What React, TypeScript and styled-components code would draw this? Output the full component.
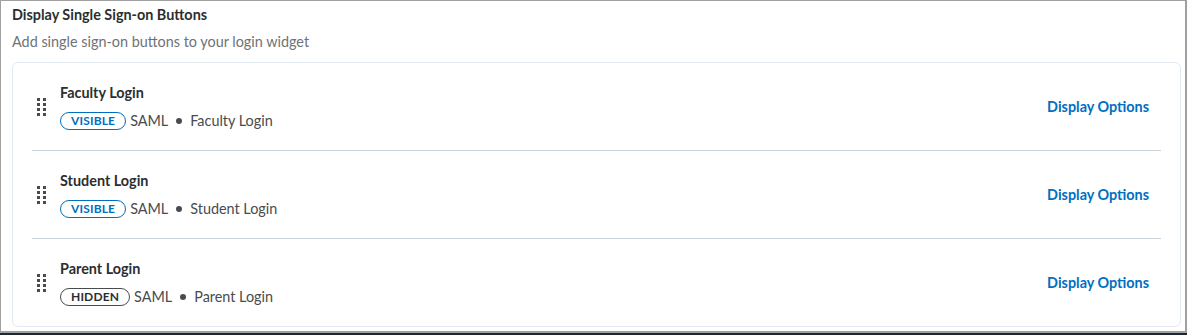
import React from "react";
import styled, { createGlobalStyle } from "styled-components";

const GlobalStyle = createGlobalStyle`
  html, body {
    margin: 0;
    padding: 0;
    background: #ffffff;
  }
  body {
    font-family: Lato, "Open Sans", sans-serif;
    color: #202122;
  }
`;

const colors = {
  blue: "#006fbf",
  text: "#2b2e30",
  meta: "#494c4e",
  muted: "#6e7376",
  handle: "#494c4e",
  line: "#cdd5dc",
  cardBorder: "#e3e9f1",
};

const Frame = styled.div`
  box-sizing: border-box;
  width: 1187px;
  height: 333px;
  border: 1px solid #a0a0a0;
  border-width: 1px 2px 2px 1px;
  padding: 4px 4px 0 11px;
`;

const BottomStrip = styled.div`
  height: 2px;
  background: #1d2633;
`;

const Heading = styled.h2`
  margin: 0;
  font-size: 14.4px;
  line-height: 20px;
  font-weight: 700;
  color: ${colors.text};
`;

const Description = styled.p`
  margin: 7px 0 10px;
  font-size: 14.4px;
  line-height: 20px;
  color: ${colors.muted};
`;

const Card = styled.div`
  box-sizing: border-box;
  border: 1px solid ${colors.cardBorder};
  border-radius: 6px;
  padding: 0 19px;
`;

const Row = styled.div<{ $last?: boolean }>`
  display: flex;
  align-items: center;
  height: 87px;
  border-bottom: ${(p) => (p.$last ? "none" : `1px solid ${colors.line}`)};
`;

const Handle = styled.div`
  display: grid;
  grid-template-columns: repeat(2, 3px);
  grid-auto-rows: 3px;
  gap: 2px 3px;
  margin: 0 14px 0 5px;
`;

const Dot = styled.span`
  background: ${colors.handle};
`;

const Info = styled.div`
  flex: 1;
  display: flex;
  flex-direction: column;
  gap: 10px;
  padding-top: 1px;
`;

const Title = styled.div`
  font-size: 14.4px;
  line-height: 18px;
  font-weight: 700;
  color: ${colors.text};
`;

const Meta = styled.div`
  display: flex;
  align-items: center;
  font-size: 14.4px;
  line-height: 18px;
  color: ${colors.meta};
`;

const Pill = styled.span<{ $hidden?: boolean }>`
  box-sizing: border-box;
  display: inline-flex;
  align-items: center;
  height: 18px;
  padding: 0 10px;
  border: 1px solid ${(p) => (p.$hidden ? colors.handle : colors.blue)};
  border-radius: 9px;
  font-size: 12px;
  font-weight: 700;
  letter-spacing: 0.15px;
  color: ${(p) => (p.$hidden ? colors.text : colors.blue)};
  margin-right: 4px;
`;

const Bullet = styled.span`
  width: 6px;
  height: 6px;
  border-radius: 50%;
  background: ${colors.meta};
  margin: 0 8px;
`;

const OptionsLink = styled.a`
  font-size: 14.4px;
  font-weight: 700;
  color: ${colors.blue};
  text-decoration: none;
  margin: 0 12px 1px 0;
  cursor: pointer;
`;

interface ILogin {
  name: string;
  hidden?: boolean;
}

const logins: ILogin[] = [
  { name: "Faculty Login" },
  { name: "Student Login" },
  { name: "Parent Login", hidden: true },
];

const DragHandle = () => (
  <Handle>
    {Array.from({ length: 8 }).map((_, i) => (
      <Dot key={i} />
    ))}
  </Handle>
);

const App = () => {
  return (
    <>
      <GlobalStyle />
      <Frame>
        <Heading>Display Single Sign-on Buttons</Heading>
        <Description>Add single sign-on buttons to your login widget</Description>
        <Card>
          {logins.map((login, i) => (
            <Row key={login.name} $last={i === logins.length - 1}>
              <DragHandle />
              <Info>
                <Title>{login.name}</Title>
                <Meta>
                  <Pill $hidden={login.hidden}>
                    {login.hidden ? "HIDDEN" : "VISIBLE"}
                  </Pill>
                  SAML
                  <Bullet />
                  {login.name}
                </Meta>
              </Info>
              <OptionsLink>Display Options</OptionsLink>
            </Row>
          ))}
        </Card>
      </Frame>
      <BottomStrip />
    </>
  );
};

export default App;
